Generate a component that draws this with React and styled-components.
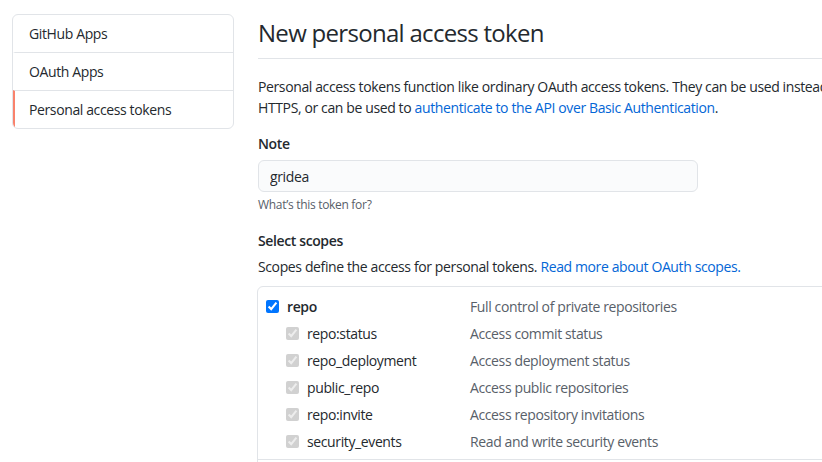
import React from "react";
import styled, { createGlobalStyle } from "styled-components";

const GlobalStyle = createGlobalStyle`
  html, body {
    margin: 0;
    padding: 0;
    background: #fff;
    overflow: hidden;
  }
  body {
    font-family: "Open Sans", "Noto Sans", sans-serif;
    font-size: 14px;
    line-height: 1.5;
    letter-spacing: -0.38px;
    color: #24292e;
  }
`;

const scopes = [
  { name: "repo:status", desc: "Access commit status" },
  { name: "repo_deployment", desc: "Access deployment status" },
  { name: "public_repo", desc: "Access public repositories" },
  { name: "repo:invite", desc: "Access repository invitations" },
  { name: "security_events", desc: "Read and write security events" },
];

const App = () => {
  return (
    <Page>
      <GlobalStyle />
      <SideNav>
        <NavItem>GitHub Apps</NavItem>
        <NavItem>OAuth Apps</NavItem>
        <NavItem selected>Personal access tokens</NavItem>
      </SideNav>
      <Main>
        <Heading>New personal access token</Heading>
        <Lead>
          Personal access tokens function like ordinary OAuth access tokens.
          They can be used instead of a password for Git over
          <br />
          HTTPS, or can be used to{" "}
          <Link href="#">authenticate to the API over Basic Authentication</Link>.
        </Lead>
        <Label>Note</Label>
        <TextInput type="text" defaultValue="gridea" />
        <Hint>What’s this token for?</Hint>
        <Label className="scopes">Select scopes</Label>
        <Text>
          Scopes define the access for personal tokens.{" "}
          <Link href="#">Read more about OAuth scopes.</Link>
        </Text>
        <ScopeBox>
          <ScopeGroup>
            <ScopeRow>
              <ScopeName>
                <Check type="checkbox" checked readOnly />
                <strong>repo</strong>
              </ScopeName>
              <ScopeDesc>Full control of private repositories</ScopeDesc>
            </ScopeRow>
            {scopes.map((s) => (
              <ScopeRow key={s.name}>
                <ScopeName sub>
                  <Check type="checkbox" checked disabled readOnly />
                  {s.name}
                </ScopeName>
                <ScopeDesc>{s.desc}</ScopeDesc>
              </ScopeRow>
            ))}
          </ScopeGroup>
          <ScopeGroup>
            <ScopeRow>
              <ScopeName>
                <Check type="checkbox" readOnly />
                <strong>workflow</strong>
              </ScopeName>
              <ScopeDesc>Update GitHub Action workflows</ScopeDesc>
            </ScopeRow>
          </ScopeGroup>
        </ScopeBox>
      </Main>
    </Page>
  );
};

const Page = styled.div`
  display: flex;
  align-items: flex-start;
  gap: 24px;
  padding: 14px 0 0 12px;
  width: 1200px;
`;

const SideNav = styled.nav`
  flex: none;
  width: 220px;
  border: 1px solid #e1e4e8;
  border-radius: 6px;
  overflow: hidden;
`;

const NavItem = styled.a`
  display: block;
  height: 37px;
  line-height: 37px;
  padding-left: 14px;
  color: #24292e;
  border-left: 2px solid ${(p) => (p.selected ? "#f9826c" : "transparent")};
  & + & {
    border-top: 1px solid #e1e4e8;
  }
`;

const Main = styled.main`
  flex: none;
  width: 900px;
`;

const Heading = styled.h2`
  margin: 1px 0 0;
  padding-bottom: 7px;
  font-size: 24px;
  font-weight: 400;
  line-height: 36px;
  letter-spacing: -0.7px;
  border-bottom: 1px solid #e1e4e8;
`;

const Lead = styled.p`
  margin: 17px 0 0;
  line-height: 21px;
`;

const Link = styled.a`
  color: #0366d6;
  text-decoration: none;
`;

const Label = styled.div`
  margin-top: 15px;
  font-weight: 600;
  line-height: 21px;
  &.scopes {
    margin-top: 16px;
  }
`;

const TextInput = styled.input`
  display: block;
  box-sizing: border-box;
  width: 440px;
  height: 32px;
  margin-top: 6px;
  padding: 5px 11px;
  font: inherit;
  letter-spacing: inherit;
  color: #24292e;
  background: #fafbfc;
  border: 1px solid #e1e4e8;
  border-radius: 6px;
  outline: none;
`;

const Hint = styled.p`
  margin: 4px 0 0;
  font-size: 12px;
  line-height: 18px;
  letter-spacing: -0.3px;
  color: #586069;
`;

const Text = styled.p`
  margin: 5px 0 0;
  line-height: 21px;
`;

const ScopeBox = styled.div`
  margin: 9px 0 0 -1px;
  border: 1px solid #e1e4e8;
  border-radius: 6px;
`;

const ScopeGroup = styled.div`
  padding: 6px 0 4px 8px;
  & + & {
    border-top: 1px solid #e1e4e8;
  }
`;

const ScopeRow = styled.div`
  display: grid;
  grid-template-columns: 204px 1fr;
  height: 27px;
  align-items: center;
`;

const ScopeName = styled.label`
  display: flex;
  align-items: center;
  padding-left: ${(p) => (p.sub ? "20px" : "0")};
  strong {
    font-weight: 600;
  }
`;

const Check = styled.input`
  width: 13px;
  height: 13px;
  margin: 0 8px 0 0;
`;

const ScopeDesc = styled.span`
  color: #586069;
`;

export default App;
